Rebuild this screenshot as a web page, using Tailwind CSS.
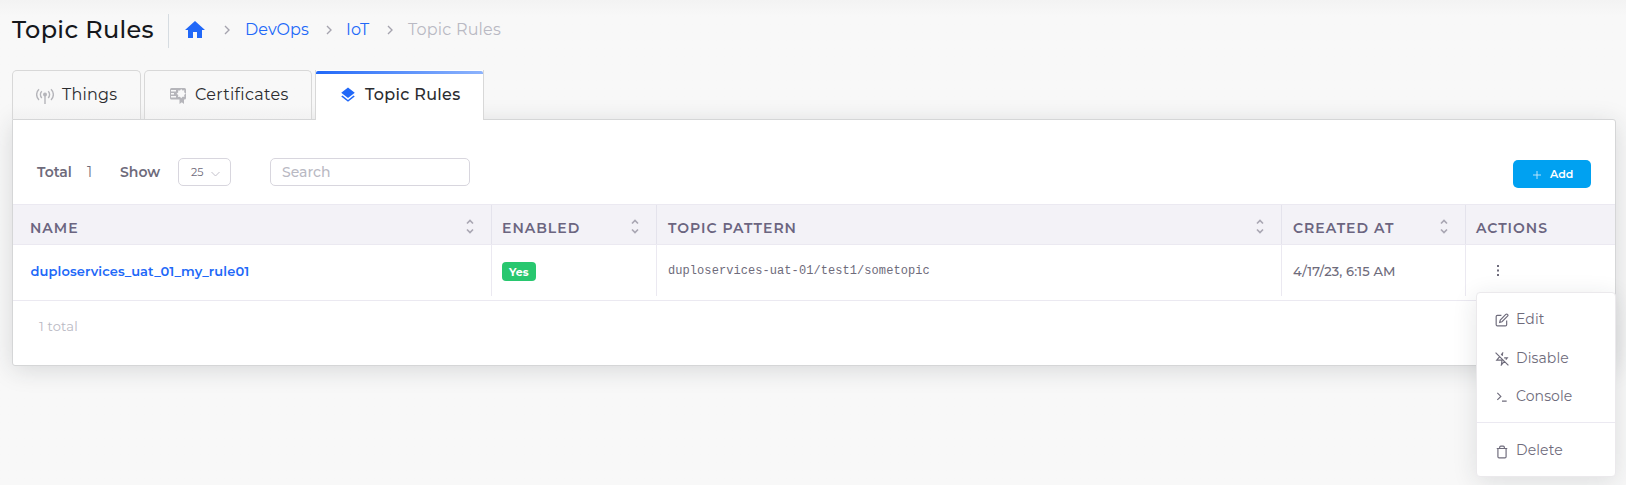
<!DOCTYPE html>
<html lang="en">
<head>
<meta charset="utf-8">
<title>Topic Rules</title>
<script src="https://cdn.jsdelivr.net/npm/@tailwindcss/browser@4"></script>
</head>
<body class="h-[485px] overflow-hidden bg-[#f8f8f8] bg-linear-to-b from-[#f3f3f3] to-[#f8f8f8] to-[16px] font-[Montserrat,Inter,sans-serif] text-[#6e6b7b]">
<header class="flex h-[70px] items-start pl-[12px] pt-[14px]">
  <h1 class="w-[156px] whitespace-nowrap text-[24px]/[31px] font-medium tracking-[0.33px] text-[#15171b]">Topic Rules</h1>
  <div class="flex h-[34px] items-center border-l border-[#d6dce1] pb-[4px] pl-[14px] text-[16px]/[24px] text-[#2168f8] whitespace-nowrap">
    <svg class="mt-px size-[24px]" viewBox="0 0 24 24" fill="currentColor"><path d="M10 20v-6h4v6h5v-8h3L12 3 2 12h3v8z"/></svg>
    <svg class="ml-[12px] mt-[2px] size-[16px] text-[#a5a3ae]" viewBox="0 0 24 24" fill="none" stroke="currentColor" stroke-width="2"><path d="M9 18l6-6-6-6"/></svg>
    <a class="ml-[10px] mt-[2px] w-[65px] tracking-[0.1px]">DevOps</a>
    <svg class="ml-[11px] mt-[2px] size-[16px] text-[#a5a3ae]" viewBox="0 0 24 24" fill="none" stroke="currentColor" stroke-width="2"><path d="M9 18l6-6-6-6"/></svg>
    <a class="ml-[9px] mt-[2px] w-[25px] tracking-[0.2px]">IoT</a>
    <svg class="ml-[11px] mt-[2px] size-[16px] text-[#a5a3ae]" viewBox="0 0 24 24" fill="none" stroke="currentColor" stroke-width="2"><path d="M9 18l6-6-6-6"/></svg>
    <span class="ml-[10px] mt-[2px] tracking-[0.2px] text-[#b9b9c3]">Topic Rules</span>
  </div>
</header>
<nav class="relative z-10 flex h-[50px] gap-[3px] pl-[12px] text-[16px]/[24px] text-[#2b2c2f] whitespace-nowrap">
  <a class="flex h-[49px] w-[129px] items-center rounded-t-[5px] border border-b-0 border-[#d8d8d8] bg-linear-to-b from-[#f8f8f8] from-70% to-[#f2f2f2] pl-[23px]">
    <svg class="mt-px size-[18px] text-[#b5b5ba]" viewBox="0 0 18 18" fill="none" stroke="currentColor" stroke-width="1.4"><circle cx="9" cy="7.500" r="2" fill="currentColor" stroke="none"/><path d="M9 8v9M5.800 4.300a4.600 4.600 0 0 0 0 6.600M12.200 4.300a4.600 4.600 0 0 1 0 6.600M3 2.200a7.400 7.400 0 0 0 0 10.800M15 2.200a7.400 7.400 0 0 1 0 10.800"/></svg>
    <span class="ml-[8px] tracking-[0.25px]">Things</span>
  </a>
  <a class="flex h-[49px] w-[168px] items-center rounded-t-[5px] border border-b-0 border-[#d8d8d8] bg-linear-to-b from-[#f8f8f8] from-70% to-[#f2f2f2] pl-[24px]">
    <svg class="mt-px size-[18px] text-[#b5b5ba]" viewBox="0 0 18 18"><path fill="currentColor" d="M2.500 1h13a1.500 1.500 0 0 1 1.500 1.500v8.500a1.500 1.500 0 0 1-1.500 1.500h-.5v4.500l-2.200-1.700-2.300 1.700v-4.500h-8a1.500 1.500 0 0 1-1.500-1.500v-8.500a1.500 1.500 0 0 1 1.500-1.500z"/><path fill="#f8f8f8" d="M2 3h5v1.500h-5zM2 6h3v1.400h-3zM2 9h5v1.500h-5zM12.200 1.900l1.200 1.600 2-.3-.3 2 1.700 1.400-1.700 1.300.4 1.900-2-.1-1.300 1.600-1.200-1.600-2 .2.300-2-1.700-1.200 1.700-1.400-.3-1.900 2 .2z"/></svg>
    <span class="ml-[8px] tracking-[0.3px]">Certificates</span>
  </a>
  <a class="relative flex h-[50px] w-[169px] items-center border-x border-[#d8d8d8] bg-white pl-[23px] pb-px font-medium">
    <i class="absolute inset-x-0 top-px h-[3px] rounded-t-[2px] bg-linear-to-r from-[#2168f8] to-[#8db3fc]"></i>
    <svg class="mt-px size-[18px] text-[#2168f8]" viewBox="0 0 24 24" fill="currentColor"><path d="M11.990 18.540l-7.370-5.730L3 14.070l9 7 9-7-1.630-1.270zM12 16l7.360-5.730L21 9l-9-7-9 7 1.630 1.270z"/></svg>
    <span class="ml-[8px] tracking-[0.3px]">Topic Rules</span>
  </a>
</nav>
<main class="relative -mt-px ml-[12px] h-[247px] w-[1604px] rounded-b-[3px] rounded-tr-[3px] border border-[#d5d6d7] bg-white shadow-[0_4px_24px_rgba(34,41,47,0.15)]">
  <div class="flex h-[84px] items-start pl-[24px] pt-[38px] text-[14px]/[29px] whitespace-nowrap">
    <span class="w-[50px] font-semibold">Total</span>
    <span class="w-[33px]">1</span>
    <span class="w-[58px] font-semibold">Show</span>
    <div class="flex h-[28px] w-[53px] items-center rounded-[5px] border border-[#d8d6de] pl-[12px] text-[11px]">25
      <svg class="ml-[8px] mt-[3px] h-[6px] w-[9px]" viewBox="0 0 9 6" fill="none" stroke="#c3c1cb"><path d="M.5 1l4 4 4-4"/></svg>
    </div>
    <div class="ml-[39px] flex h-[28px] w-[200px] items-center rounded-[5px] border border-[#d8d6de] pl-[11px] font-medium text-[#b9b9c3]">Search</div>
    <button class="ml-auto mr-[24px] mt-[2px] flex h-[28px] w-[78px] items-center rounded-[5px] bg-[#00a1f1] pl-[20px] text-[11px] font-semibold text-white">
      <svg class="mt-[2px] size-[8px]" viewBox="0 0 9 9" fill="none" stroke="#cdecfc"><path d="M4.500 0v9M0 4.500h9"/></svg>
      <span class="ml-[9px]">Add</span>
    </button>
  </div>
  <div class="grid h-[41px] grid-cols-[479px_165px_625px_184px_1fr] border-y border-[#ebe9f1] bg-[#f3f2f7] text-[14px]/[46px] font-semibold tracking-[1px] text-[#6b6580] whitespace-nowrap [&>div]:flex [&>div]:h-[39px] [&>div]:justify-between [&>div]:pl-[10px] [&>div]:pr-[17px] [&_svg]:mt-[14px] [&_svg]:h-[15px] [&_svg]:w-[8px]">
    <div class="pl-[17px]! border-r border-[#e4e3ec]">NAME<svg viewBox="0 0 8 15" fill="none" stroke="#a9a7b3" stroke-width="1.700"><path d="M1 4.500l3-3 3 3M1 10.500l3 3 3-3"/></svg></div>
    <div class="border-r border-[#e4e3ec]">ENABLED<svg viewBox="0 0 8 15" fill="none" stroke="#a9a7b3" stroke-width="1.700"><path d="M1 4.500l3-3 3 3M1 10.500l3 3 3-3"/></svg></div>
    <div class="pl-[11px]! border-r border-[#e4e3ec]">TOPIC PATTERN<svg viewBox="0 0 8 15" fill="none" stroke="#a9a7b3" stroke-width="1.700"><path d="M1 4.500l3-3 3 3M1 10.500l3 3 3-3"/></svg></div>
    <div class="pl-[11px]! border-r border-[#e4e3ec]">CREATED AT<svg viewBox="0 0 8 15" fill="none" stroke="#a9a7b3" stroke-width="1.700"><path d="M1 4.500l3-3 3 3M1 10.500l3 3 3-3"/></svg></div>
    <div>ACTIONS</div>
  </div>
  <div class="grid h-[56px] grid-cols-[479px_165px_625px_184px_1fr] border-b border-[#ebe9f1] text-[13px]/[52px] whitespace-nowrap [&>div]:h-[51px] [&>div]:pl-[11px]">
    <div class="pl-[17.5px]! border-r border-[#ebe9f1] font-semibold tracking-[0.12px] text-[#2168f8]">duploservices_uat_01_my_rule01</div>
    <div class="border-r border-[#ebe9f1]"><span class="-ml-px mt-[17px] flex h-[19px] w-[34px] items-center rounded-[4px] bg-[#28c76f] pl-[7px] text-[11px] font-bold text-white">Yes</span></div>
    <div class="border-r border-[#ebe9f1] font-['Liberation_Mono',monospace] text-[12px] tracking-[0.07px]">duploservices-uat-01/test1/sometopic</div>
    <div class="border-r border-[#ebe9f1] font-medium tracking-[0.12px]">4/17/23, 6:15 AM</div>
    <div class="pt-[20px] pl-[31px]!"><svg class="h-[12px] w-[3px]" viewBox="0 0 3 12" fill="#6e6b7b"><path d="M0 0h2v2h-2zM0 4.500h2v2h-2zM0 9h2v2h-2z"/></svg></div>
  </div>
  <div class="pl-[26px] text-[13px]/[51px] tracking-[0.2px] text-[#b9b9c3]">1 total</div>
</main>
<div class="absolute left-[1476px] top-[292px] z-20 h-[185px] w-[140px] rounded-[4px] border border-[#ebe9ec] bg-white pt-[7px] text-[14px]/[21px] tracking-[0.1px] shadow-[0_5px_25px_rgba(34,41,47,0.12)] whitespace-nowrap [&_svg]:size-[14px] [&_svg]:mt-px [&>div]:flex [&>div]:items-center [&>div]:gap-[7px] [&>div]:pl-[18px] [&>div]:h-[38.500px]">
  <div><svg viewBox="0 0 24 24" fill="none" stroke="currentColor" stroke-width="2"><path d="M11 4H4a2 2 0 0 0-2 2v14a2 2 0 0 0 2 2h14a2 2 0 0 0 2-2v-7"/><path d="M18.500 2.500a2.121 2.121 0 0 1 3 3L12 15l-4 1 1-4z"/></svg>Edit</div>
  <div class="pt-[2px]"><svg viewBox="0 0 24 24" fill="none" stroke="currentColor" stroke-width="2"><path d="M12.410 6.750L13 2l-2.430 2.920M18.570 12.910L21 10h-5.340M8 8l-5 6h9l-1 8 5-6M1 1l22 22"/></svg>Disable</div>
  <div><svg viewBox="0 0 24 24" fill="none" stroke="currentColor" stroke-width="2"><path d="M4 17l6-6-6-6M12 19h8"/></svg>Console</div>
  <div class="mt-[6px] h-[56px]! items-start! border-t border-[#ebe9f1] pt-[17px]"><svg class="mt-[5px]!" viewBox="0 0 24 24" fill="none" stroke="currentColor" stroke-width="2"><path d="M3 6h18M19 6v14a2 2 0 0 1-2 2H7a2 2 0 0 1-2-2V6m3 0V4a2 2 0 0 1 2-2h4a2 2 0 0 1 2 2v2"/></svg>Delete</div>
</div>
</body>
</html>
